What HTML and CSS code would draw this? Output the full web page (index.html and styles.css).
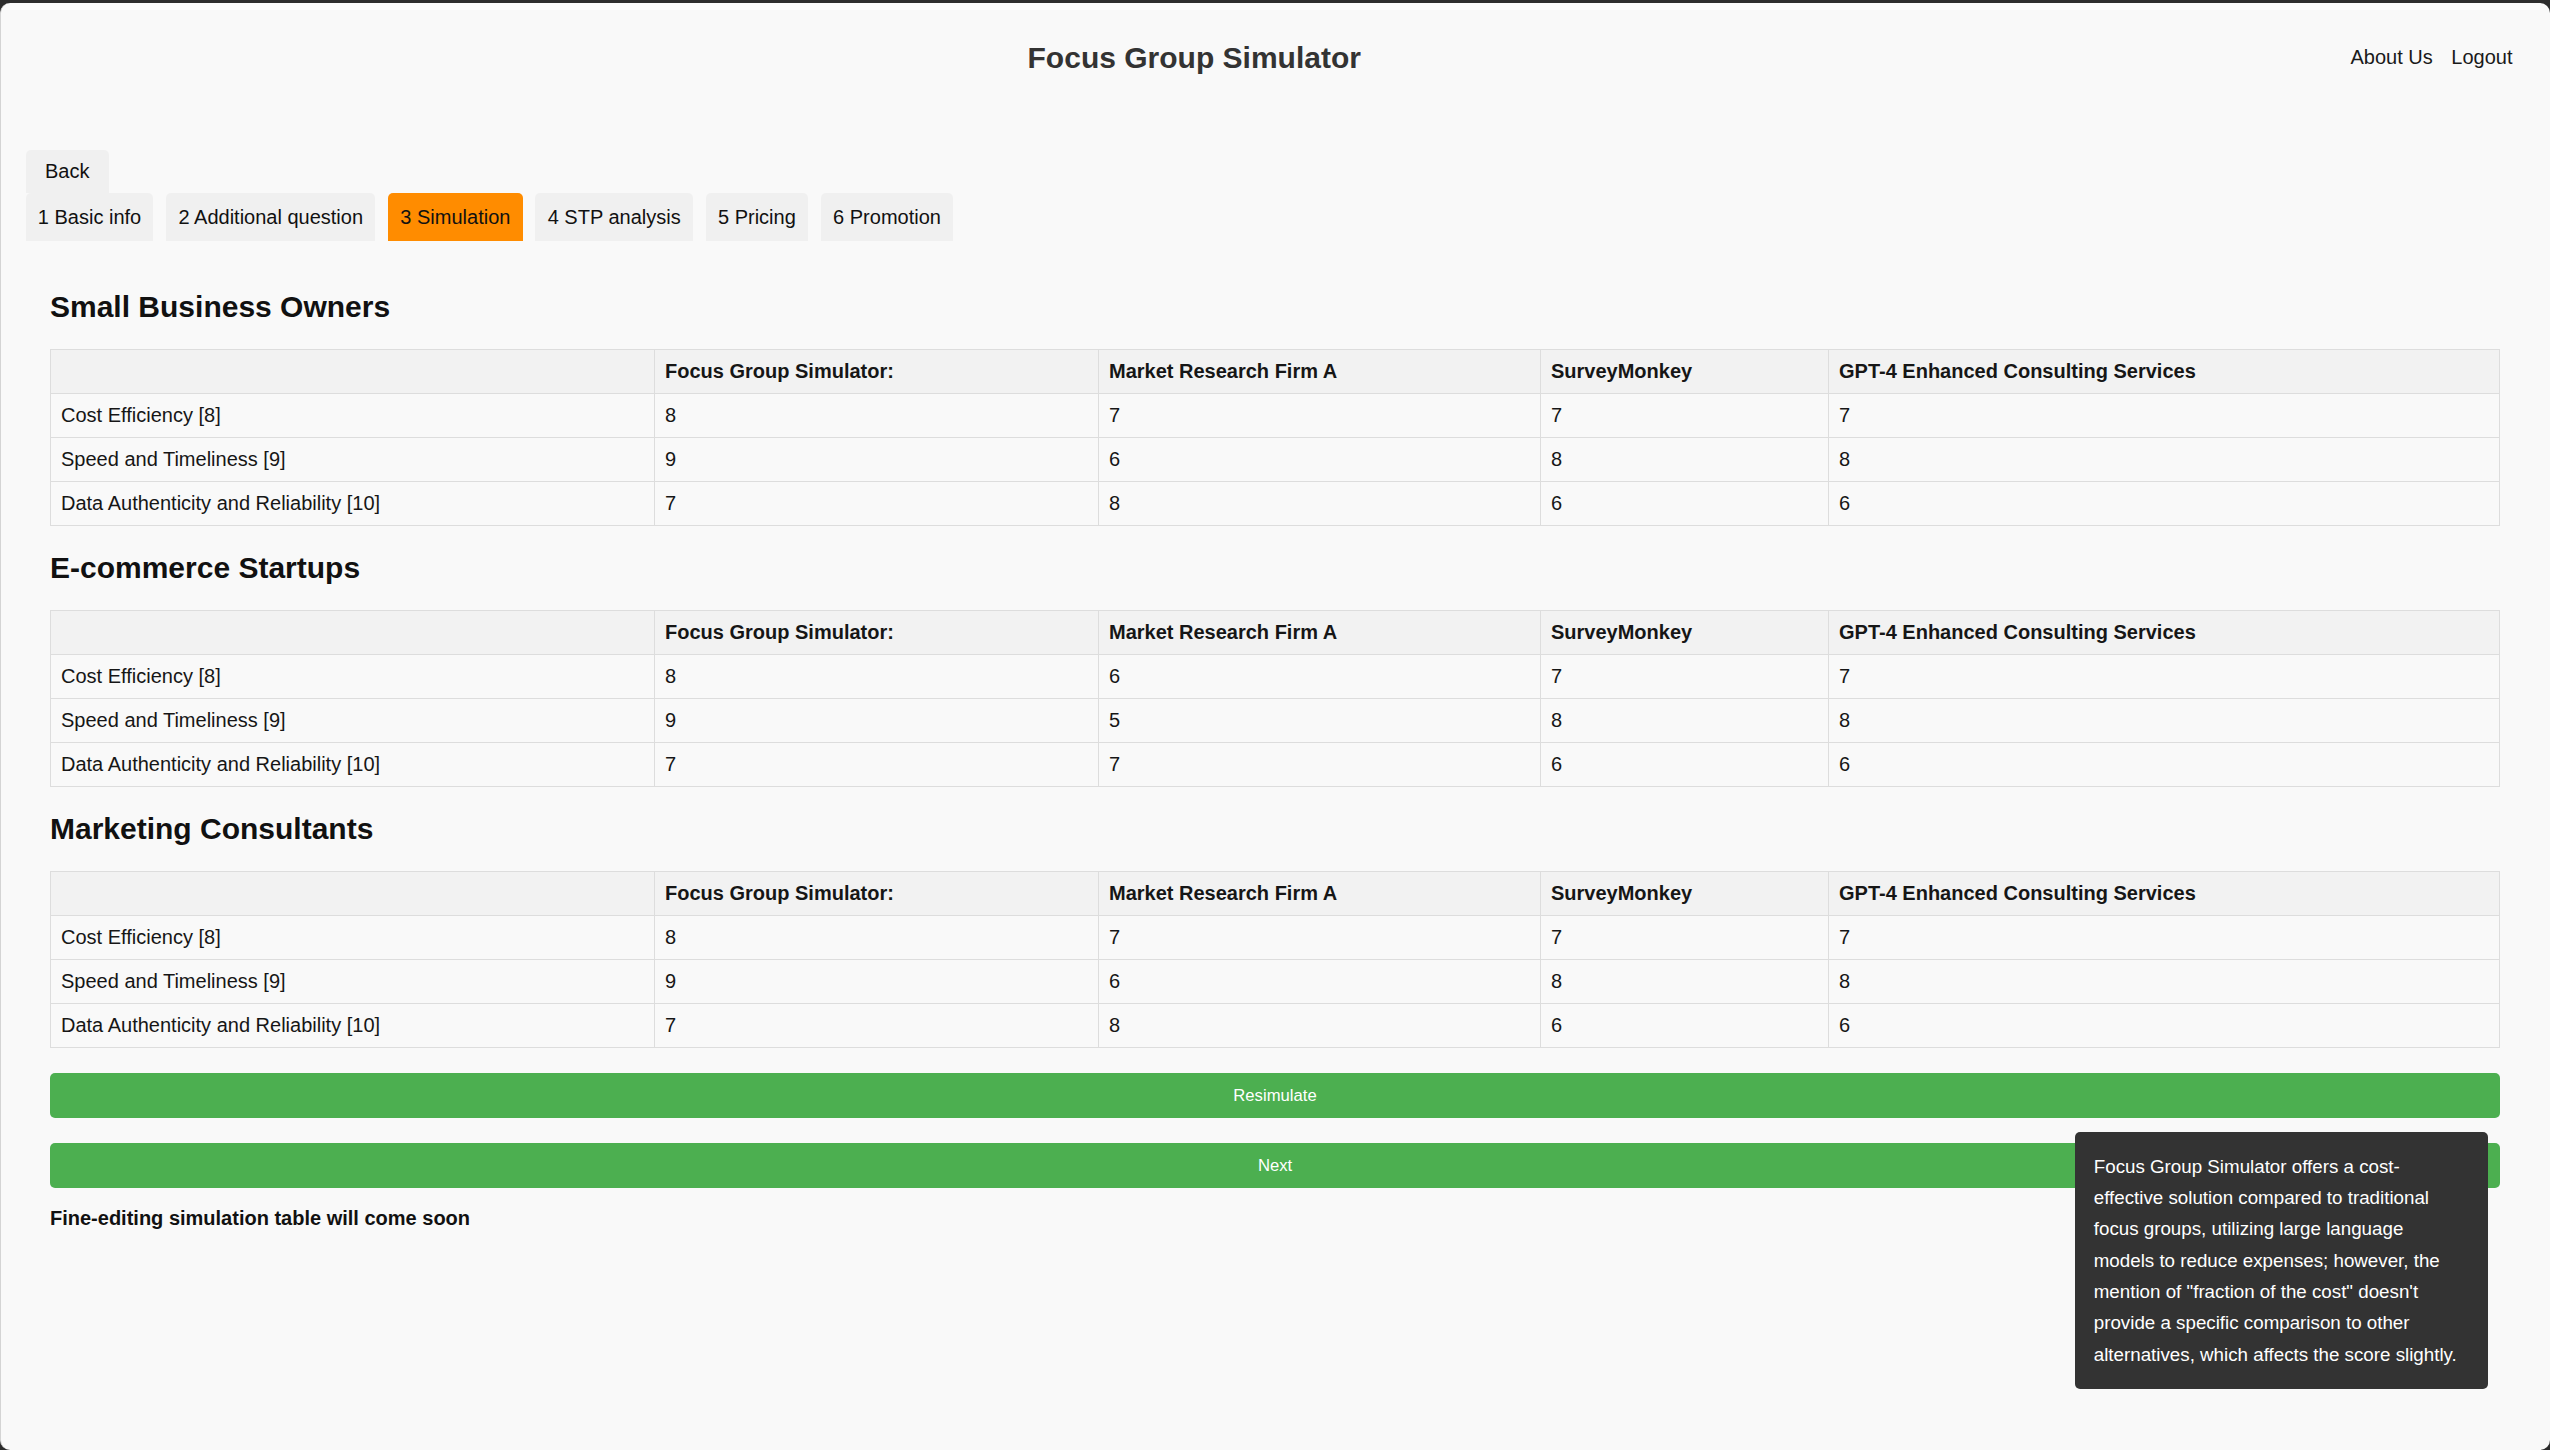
FILE: index.html
```html
<!DOCTYPE html>
<html lang="en">
<head>
<meta charset="utf-8">
<title>Focus Group Simulator</title>
<link rel="stylesheet" href="styles.css">
</head>
<body>
<div class="window">
  <header class="topbar">
    <h1 class="app-title">Focus Group Simulator</h1>
    <nav class="top-nav">
      <a href="#">About Us</a>
      <a href="#">Logout</a>
    </nav>
  </header>

  <div class="steps">
    <button class="back-btn">Back</button>
    <div class="tabs">
      <button class="tab">1 Basic info</button>
      <button class="tab">2 Additional question</button>
      <button class="tab active">3 Simulation</button>
      <button class="tab">4 STP analysis</button>
      <button class="tab">5 Pricing</button>
      <button class="tab">6 Promotion</button>
    </div>
  </div>

  <main class="content">
    <h2 class="segment-title">Small Business Owners</h2>
    <table class="sim-table">
      <colgroup><col class="c1"><col class="c2"><col class="c3"><col class="c4"><col class="c5"></colgroup>
      <thead>
        <tr><th></th><th>Focus Group Simulator:</th><th>Market Research Firm A</th><th>SurveyMonkey</th><th>GPT-4 Enhanced Consulting Services</th></tr>
      </thead>
      <tbody>
        <tr><td>Cost Efficiency [8]</td><td>8</td><td>7</td><td>7</td><td>7</td></tr>
        <tr><td>Speed and Timeliness [9]</td><td>9</td><td>6</td><td>8</td><td>8</td></tr>
        <tr><td>Data Authenticity and Reliability [10]</td><td>7</td><td>8</td><td>6</td><td>6</td></tr>
      </tbody>
    </table>

    <h2 class="segment-title">E-commerce Startups</h2>
    <table class="sim-table">
      <colgroup><col class="c1"><col class="c2"><col class="c3"><col class="c4"><col class="c5"></colgroup>
      <thead>
        <tr><th></th><th>Focus Group Simulator:</th><th>Market Research Firm A</th><th>SurveyMonkey</th><th>GPT-4 Enhanced Consulting Services</th></tr>
      </thead>
      <tbody>
        <tr><td>Cost Efficiency [8]</td><td>8</td><td>6</td><td>7</td><td>7</td></tr>
        <tr><td>Speed and Timeliness [9]</td><td>9</td><td>5</td><td>8</td><td>8</td></tr>
        <tr><td>Data Authenticity and Reliability [10]</td><td>7</td><td>7</td><td>6</td><td>6</td></tr>
      </tbody>
    </table>

    <h2 class="segment-title">Marketing Consultants</h2>
    <table class="sim-table">
      <colgroup><col class="c1"><col class="c2"><col class="c3"><col class="c4"><col class="c5"></colgroup>
      <thead>
        <tr><th></th><th>Focus Group Simulator:</th><th>Market Research Firm A</th><th>SurveyMonkey</th><th>GPT-4 Enhanced Consulting Services</th></tr>
      </thead>
      <tbody>
        <tr><td>Cost Efficiency [8]</td><td>8</td><td>7</td><td>7</td><td>7</td></tr>
        <tr><td>Speed and Timeliness [9]</td><td>9</td><td>6</td><td>8</td><td>8</td></tr>
        <tr><td>Data Authenticity and Reliability [10]</td><td>7</td><td>8</td><td>6</td><td>6</td></tr>
      </tbody>
    </table>

    <button class="action-btn">Resimulate</button>
    <button class="action-btn">Next</button>

    <p class="note">Fine-editing simulation table will come soon</p>
  </main>

  <div class="tooltip">Focus Group Simulator offers a cost-effective solution compared to traditional focus groups, utilizing large language models to reduce expenses; however, the mention of "fraction of the cost" doesn't provide a specific comparison to other alternatives, which affects the score slightly.</div>
</div>
</body>
</html>
```

FILE: styles.css
```css
html, body {
  margin: 0;
  padding: 0;
}

body {
  background: #2b2b2b;
  font-family: "Liberation Sans", Arial, Helvetica, sans-serif;
  color: #111;
}

.window {
  position: relative;
  margin-top: 3px;
  height: 1447px;
  background: #f9f9f9;
  border-radius: 10px;
  border-left: 1px solid #d4d4d4;
  box-sizing: border-box;
  overflow: hidden;
}

/* Header */
.topbar {
  display: flex;
  align-items: center;
  padding: 37.5px 37.5px 37.5px 37px;
}

.app-title {
  flex: 1;
  margin: 0;
  text-align: center;
  font-size: 30px;
  line-height: 34.5px;
  font-weight: bold;
  color: #333;
}

.top-nav {
  display: flex;
  gap: 18.6px;
}

.top-nav a {
  font-size: 20px;
  line-height: 23px;
  color: #1a1a1a;
  text-decoration: none;
}

/* Steps */
.steps {
  margin-top: 37.5px;
  padding: 0 24.5px;
}

.back-btn,
.tab {
  display: block;
  font-family: "Liberation Sans", Arial, Helvetica, sans-serif;
  font-size: 20px;
  line-height: 23px;
  color: #111;
  background: #f0f0f0;
  border: none;
  border-radius: 5px 5px 0 0;
  margin: 0;
}

.back-btn {
  padding: 10px 19.5px;
}

.tabs {
  display: flex;
  gap: 12.7px;
}

.tab {
  padding: 12.5px 12.3px;
}

.tab.active {
  background: #ff8c00;
}

/* Content */
.content {
  padding: 23px 50px 0 49px;
}

.segment-title {
  font-size: 30px;
  line-height: 34px;
  font-weight: bold;
  margin: 25px 0;
  color: #111;
}

.segment-title:first-child {
  margin-top: 25.8px;
}

.sim-table {
  width: 100%;
  table-layout: fixed;
  border-collapse: collapse;
  font-size: 20px;
  line-height: 23px;
}

.c1 { width: 604px; }
.c2 { width: 444px; }
.c3 { width: 442px; }
.c4 { width: 288px; }

.sim-table th,
.sim-table td {
  border: 1px solid #dddddd;
  padding: 10px;
  text-align: left;
  color: #161616;
}

.sim-table th {
  background: #f2f2f2;
  font-weight: bold;
}

.action-btn {
  display: block;
  width: 100%;
  margin: 25.6px 0 0 0;
  padding: 12.5px 0;
  height: 44.4px;
  background: #4caf50;
  color: #ffffff;
  border: none;
  border-radius: 5px;
  font-family: "Liberation Sans", Arial, Helvetica, sans-serif;
  font-size: 16.67px;
  line-height: 19px;
}

.note {
  margin: 19.5px 0 0 0;
  font-size: 20px;
  line-height: 23px;
  font-weight: bold;
  color: #111;
}

/* Tooltip */
.tooltip {
  position: absolute;
  left: 2074px;
  top: 1129px;
  width: 375px;
  padding: 18.75px;
  background: #333333;
  color: #ffffff;
  font-size: 18.75px;
  line-height: 31.3px;
  border-radius: 5px;
}
```
